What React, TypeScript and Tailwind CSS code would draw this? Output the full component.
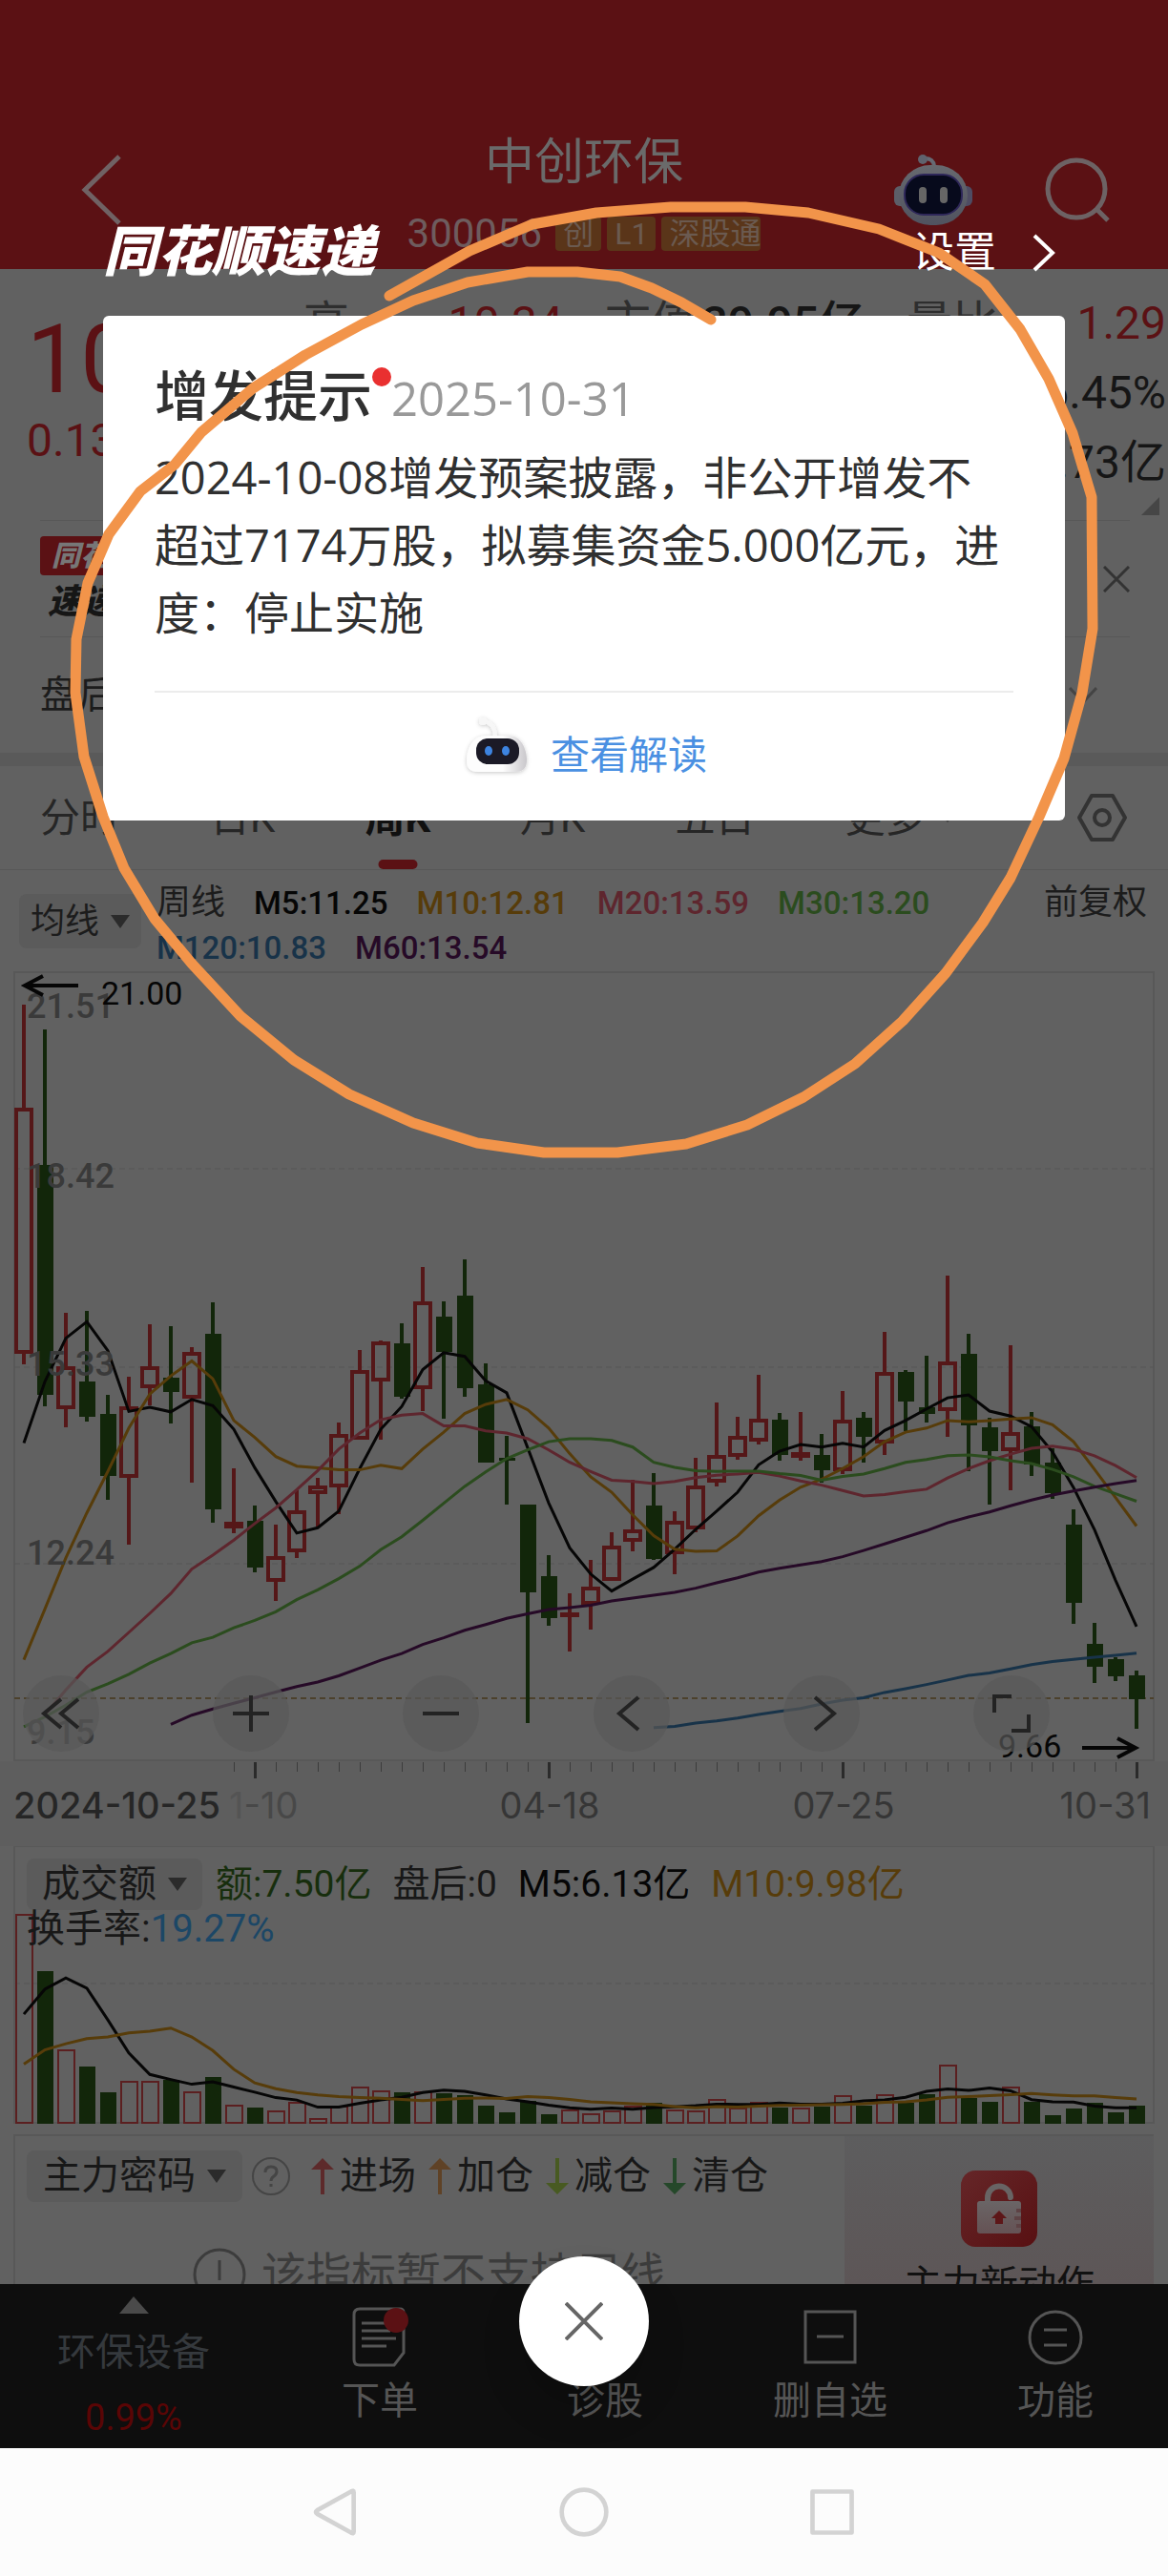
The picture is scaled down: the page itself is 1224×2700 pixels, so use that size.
import React, { useState } from 'react';

// [up, high, top, bottom, low], one entry per week
const candles = [
  [1, 1053, 1161, 1419, 1430], [0, 1079, 1221, 1462, 1474], [1, 1376, 1432, 1477, 1496], [0, 1374, 1448, 1485, 1490],
  [0, 1462, 1482, 1547, 1572], [1, 1443, 1474, 1549, 1619], [1, 1388, 1432, 1455, 1473], [0, 1390, 1444, 1459, 1492],
  [1, 1412, 1417, 1466, 1554], [0, 1365, 1398, 1582, 1596], [1, 1539, 1595, 1602, 1607], [0, 1578, 1594, 1643, 1648],
  [1, 1598, 1631, 1658, 1678], [1, 1562, 1583, 1627, 1633], [1, 1549, 1557, 1566, 1600], [1, 1491, 1503, 1559, 1587],
  [1, 1415, 1436, 1509, 1509], [1, 1405, 1406, 1448, 1509], [0, 1387, 1408, 1464, 1466], [1, 1328, 1364, 1456, 1479],
  [0, 1364, 1380, 1417, 1487], [0, 1320, 1358, 1455, 1464], [0, 1429, 1451, 1533, 1533], [0, 1505, 1528, 1531, 1577],
  [0, 1577, 1577, 1669, 1806], [0, 1630, 1652, 1696, 1704], [1, 1670, 1690, 1695, 1731], [1, 1635, 1663, 1682, 1708],
  [1, 1606, 1620, 1657, 1657], [1, 1551, 1603, 1616, 1626], [0, 1544, 1578, 1634, 1635], [1, 1584, 1594, 1629, 1650],
  [1, 1528, 1557, 1603, 1606], [1, 1470, 1525, 1554, 1558], [1, 1485, 1505, 1527, 1530], [1, 1441, 1487, 1511, 1514],
  [0, 1481, 1488, 1525, 1531], [1, 1480, 1522, 1528, 1531], [0, 1503, 1525, 1541, 1554], [1, 1458, 1488, 1542, 1545],
  [0, 1480, 1486, 1506, 1533], [1, 1396, 1438, 1513, 1525], [0, 1436, 1438, 1469, 1500], [0, 1421, 1475, 1482, 1491],
  [1, 1337, 1427, 1479, 1506], [0, 1398, 1419, 1494, 1542], [0, 1486, 1496, 1521, 1577], [1, 1410, 1501, 1521, 1562],
  [0, 1480, 1495, 1535, 1547], [0, 1518, 1533, 1565, 1571], [0, 1582, 1598, 1680, 1702], [0, 1701, 1723, 1747, 1764],
  [0, 1737, 1739, 1757, 1762], [0, 1751, 1756, 1781, 1812],
];

const averages = [
  { name: 'm5', color: '#060606', start: 0, data: [628, 480, 375, 335, 405, 552, 542, 553, 523, 538, 595, 688, 770, 846, 833, 793, 690, 595, 540, 451, 410, 419, 478, 507, 640, 773, 882, 945, 986, 957, 929, 885, 837, 793, 747, 681, 648, 632, 638, 629, 638, 598, 574, 546, 519, 512, 551, 563, 589, 650, 736, 838, 960, 1072] },
  { name: 'm10', color: '#573c0a', start: 0, data: [1152, 1030, 906, 797, 697, 592, 510, 466, 430, 473, 574, 615, 661, 684, 688, 693, 693, 682, 690, 643, 602, 557, 535, 523, 548, 592, 654, 710, 747, 802, 852, 885, 890, 889, 853, 804, 766, 735, 716, 690, 661, 625, 602, 592, 574, 577, 574, 570, 567, 584, 625, 692, 760, 829] },
  { name: 'm20', color: '#5e262e', start: 1, data: [1285, 1225, 1170, 1132, 1086, 1040, 992, 933, 899, 863, 823, 785, 741, 695, 643, 604, 572, 561, 557, 587, 587, 599, 604, 618, 645, 675, 697, 718, 721, 726, 721, 712, 706, 703, 699, 708, 720, 730, 743, 756, 753, 746, 740, 713, 690, 671, 655, 641, 636, 643, 659, 683, 712] },
  { name: 'm30', color: '#2b4c1e', start: 0, data: [1314, 1290, 1262, 1230, 1210, 1187, 1160, 1137, 1111, 1098, 1075, 1057, 1036, 1007, 983, 956, 926, 886, 855, 815, 774, 733, 698, 666, 645, 625, 618, 618, 622, 638, 675, 687, 695, 697, 696, 696, 702, 707, 718, 709, 703, 690, 675, 668, 659, 657, 662, 671, 678, 692, 710, 733, 751, 769] },
  { name: 'm60', color: '#260a27', start: 7, data: [1308, 1286, 1271, 1257, 1244, 1230, 1217, 1206, 1191, 1172, 1153, 1137, 1115, 1099, 1081, 1067, 1052, 1041, 1031, 1026, 1020, 1010, 1003, 996, 989, 979, 966, 954, 940, 931, 923, 915, 903, 888, 872, 856, 840, 821, 807, 795, 780, 766, 754, 744, 735, 726, 719] },
  { name: 'm120', color: '#183349', start: 30, data: [1316, 1313, 1305, 1300, 1293, 1284, 1277, 1270, 1259, 1250, 1244, 1231, 1222, 1212, 1201, 1190, 1184, 1174, 1164, 1156, 1151, 1146, 1141, 1136] },
];

const volumes = [
  2006, 2066, 2148, 2166, 2193, 2181, 2181, 2180, 2192, 2177, 2206, 2209, 2212, 2203, 2220, 2207, 2187, 2191,
  2193, 2192, 2194, 2196, 2207, 2214, 2202, 2216, 2211, 2215, 2212, 2207, 2204, 2211, 2212, 2200, 2209, 2203,
  2209, 2209, 2208, 2196, 2207, 2195, 2204, 2195, 2164, 2199, 2203, 2187, 2203, 2217, 2210, 2204, 2214, 2207,
];
const volumeM5 = [703, 630, 597, 627, 720, 817, 880, 895, 909, 902, 917, 932, 948, 955, 976, 976, 965, 955, 947, 933, 926, 930, 940, 952, 960, 970, 978, 982, 979, 982, 977, 975, 972, 967, 968, 968, 964, 967, 967, 965, 958, 955, 947, 930, 923, 927, 920, 928, 954, 960, 961, 973, 978, 978];
const volumeM10 = [850, 808, 790, 775, 770, 758, 753, 744, 770, 810, 865, 905, 922, 933, 940, 945, 948, 950, 953, 957, 953, 950, 949, 951, 945, 948, 953, 960, 963, 966, 968, 974, 978, 974, 976, 973, 971, 970, 969, 968, 966, 962, 960, 955, 947, 945, 942, 939, 936, 940, 943, 943, 948, 952];

const x = (i: number) => 25 + i * 22;
const priceLine = (data: number[], start: number) =>
  data.map((v, i) => `${x(i + start)},${(1240 + v * 0.4337).toFixed(1)}`).join(' ');
const volumeLine = (data: number[]) => data.map((v, i) => `${x(i)},${(1860 + v / 2.8).toFixed(1)}`).join(' ');

const tabs = ['分时', '日K', '周K', '月K', '五日'];

function Triangle({ className = 'w-5' }: { className?: string }) {
  return (
    <svg viewBox="0 0 20 14" className={className}>
      <path d="M0 0H20L10 14Z" fill="#2b2b2b" />
    </svg>
  );
}

function HeaderRobot() {
  return (
    <svg viewBox="0 0 82 76" className="w-[82px]">
      <defs>
        <linearGradient id="head" x1="0" y1="0" x2="0" y2="1">
          <stop offset="0" stopColor="#67696f" />
          <stop offset="1" stopColor="#50535f" />
        </linearGradient>
      </defs>
      <path d="M30 5Q41 4 42 13" stroke="#666a74" strokeWidth="4" fill="none" />
      <circle cx="30" cy="6" r="5" fill="#5f636e" />
      <rect x="0" y="34" width="14" height="21" rx="6" fill="#5c5e68" />
      <rect x="68" y="34" width="14" height="21" rx="6" fill="#4e4c63" />
      <rect x="5" y="12" width="72" height="63" rx="33" fill="url(#head)" />
      <rect x="11" y="22" width="60" height="42" rx="20" fill="#070a1c" stroke="#2e2759" strokeWidth="2" />
      <rect x="26" y="35" width="8" height="17" rx="4" fill="#666" />
      <rect x="48" y="35" width="8" height="17" rx="4" fill="#666" />
    </svg>
  );
}

function CardRobot() {
  return (
    <svg viewBox="0 0 76 68" className="w-[76px]">
      <defs>
        <linearGradient id="shell" x1="0" y1="0" x2="1" y2="0">
          <stop offset="0.6" stopColor="#fdfdfd" />
          <stop offset="1" stopColor="#c9c7cb" />
        </linearGradient>
        <filter id="soft" x="-20%" y="-20%" width="140%" height="140%">
          <feDropShadow dx="0" dy="1" stdDeviation="2" floodColor="#000" floodOpacity="0.22" />
        </filter>
      </defs>
      <g filter="url(#soft)">
        <path d="M24 9Q36 11 36 26" stroke="#f7f7f7" strokeWidth="4" fill="none" />
        <circle cx="23" cy="9" r="4" fill="#f7f7f7" />
        <path d="M27 24H50C63 24 69 38 69 50C69 59 64 62 57 62H18C10 62 6 58 6 51C6 38 12 24 27 24Z" fill="url(#shell)" />
      </g>
      <rect x="16" y="27" width="45" height="27" rx="12" fill="#1b1a26" />
      <ellipse cx="29" cy="40" rx="4" ry="5" fill="#3d84e0" />
      <ellipse cx="47" cy="40" rx="4" ry="5" fill="#3d84e0" />
    </svg>
  );
}

function Header() {
  return (
    <header className="grid grid-cols-[1fr_auto_1fr] bg-[#5b1114] pt-[134px] text-[#6a6a6a]">
      <button aria-label="返回" className="flex h-[130px] items-center pl-[84px]">
        <svg viewBox="0 0 44 74" className="w-11" fill="none" stroke="#706264" strokeWidth="5">
          <path d="M41 2L5 37L41 72" />
        </svg>
      </button>
      <div className="flex flex-col items-center">
        <h1 className="h-[74px] text-[52px] leading-[74px]">中创环保</h1>
        <div className="flex h-[74px] items-center gap-[6px] text-[32px] leading-9 text-[#6b5a50]">
          <span className="mr-2 text-[42px] text-[#6e5c5e]">300056</span>
          <span className="rounded bg-[#5a3519] px-2">创</span>
          <span className="rounded bg-[#5a3519] px-2">L1</span>
          <span className="rounded bg-[#5a3519] pl-2">深股通</span>
        </div>
      </div>
      <div className="flex h-[130px] items-center justify-end gap-[76px] pr-[59px]">
        <button aria-label="智能助手"><HeaderRobot /></button>
        <button aria-label="搜索">
          <svg viewBox="0 0 70 70" className="w-[70px]" fill="none" stroke="#6d6264" strokeWidth="5">
            <circle cx="33" cy="34" r="30" />
            <path d="M54 55L66 67" />
          </svg>
        </button>
      </div>
    </header>
  );
}

function Quote() {
  return (
    <section>
      <div className="flex pt-5 text-[48px] leading-[73px] text-[#161616]">
        <div className="w-[318px] pl-[28px] text-[#5b1114]">
          <div className="pt-5 text-[100px] leading-[110px]">10.22</div>
          <div className="leading-[60px]">0.13</div>
        </div>
        <div className="grid flex-1 grid-cols-3 gap-x-11 pr-[2px]">
          <p className="flex justify-between"><span className="text-[#2e2e2e]">高</span><span className="text-[#5b1114]">10.34</span></p>
          <p className="flex justify-between"><span className="text-[#2e2e2e]">市值</span><span className="font-medium">39.95亿</span></p>
          <p className="flex justify-between"><span className="text-[#2e2e2e]">量比</span><span className="text-[#5b1114]">1.29</span></p>
          <p className="col-start-3 text-right">6.45%</p>
          <p className="col-start-3 text-right">0.73亿</p>
        </div>
      </div>
      <div className="flex justify-end pr-[9px]">
        <svg viewBox="0 0 19 19" className="w-[19px]"><path d="M19 0V19H0Z" fill="#464646" /></svg>
      </div>
      <div className="mt-[5px] mr-[40px] ml-[42px] flex h-[123px] items-center justify-between border-y border-[#585858]">
        <div className="w-[100px] overflow-hidden leading-[41px] font-black italic">
          <p className="rounded bg-[#5b1114] pl-3 text-[30px] whitespace-nowrap text-[#777]">同花顺</p>
          <p className="pt-2 pl-2 text-[36px] text-[#161616]">速递</p>
        </div>
        <button aria-label="关闭提示">
          <svg viewBox="0 0 28 28" className="w-7" stroke="#333" strokeWidth="3"><path d="M1 1L27 27M27 1L1 27" /></svg>
        </button>
      </div>
      <div className="flex h-[121px] items-center justify-between pr-[74px] pl-[42px] text-[40px] text-[#1c1c1c]">
        <span>盘后</span>
        <svg viewBox="0 0 30 20" className="w-[30px]" fill="none" stroke="#444" strokeWidth="3"><path d="M1 2L15 17L29 2" /></svg>
      </div>
      <div className="h-[14px] bg-[#5a5a5a]" />
    </section>
  );
}

function Tabs({ active, onSelect }: { active: string; onSelect: (tab: string) => void }) {
  return (
    <nav className="flex h-[109px] items-center gap-[94px] border-b border-[#585858] px-[42px] text-[42px] text-[#262626]">
      {tabs.map((tab) => (
        <button key={tab} onClick={() => onSelect(tab)} className={`relative h-full ${tab === active ? 'font-bold text-[#101010]' : ''}`}>
          {tab}
          {tab === active && <span className="absolute bottom-0 left-1/2 h-[10px] w-[41px] -translate-x-1/2 rounded-full bg-[#5b1114]" />}
        </button>
      ))}
      <button className="flex items-center gap-4">更多<Triangle className="w-4 opacity-60" /></button>
      <button aria-label="图表设置" className="ml-auto">
        <svg viewBox="0 0 54 52" className="w-[54px]" fill="none" stroke="#333" strokeWidth="4">
          <path d="M16 3H38L51 26L38 49H16L3 26Z" strokeLinejoin="round" />
          <circle cx="27" cy="26" r="8" />
        </svg>
      </button>
    </nav>
  );
}

function AverageLegend() {
  return (
    <div className="flex h-[106px] items-start pr-[22px] pl-[20px] text-[#1c1c1c]">
      <button className="mt-[25px] flex h-[57px] w-[128px] items-center justify-center gap-3 rounded-lg bg-[#5b5b5b] text-[36px]">
        均线<Triangle />
      </button>
      <div className="mt-[11px] ml-4 flex flex-1 flex-wrap gap-x-[30px] text-[33px] leading-[47px] font-medium">
        <span className="text-[36px] font-normal">周线</span>
        <span className="text-[#060606]">M5:11.25</span>
        <span className="text-[#573c0a]">M10:12.81</span>
        <span className="text-[#5e262e]">M20:13.59</span>
        <span className="text-[#2b4c1e]">M30:13.20</span>
        <span className="text-[#183349]">M120:10.83</span>
        <span className="text-[#260a27]">M60:13.54</span>
      </div>
      <button className="mt-[11px] text-[36px] leading-[47px]">前复权</button>
    </div>
  );
}

function PriceChart() {
  return (
    <div className="relative">
      <svg viewBox="0 1018 1224 917" className="block w-full" fontFamily="Roboto, sans-serif">
        <rect x="15" y="1019" width="1194" height="826" fill="none" stroke="#585858" strokeWidth="2" />
        <rect x="0" y="1846" width="1224" height="89" fill="#5e5e5e" />
        {[1225, 1433, 1639].map((y) => (
          <line key={y} x1="15" x2="1209" y1={y} y2={y} stroke="#565656" strokeDasharray="6 4" />
        ))}
        <line x1="15" x2="1209" y1="1780" y2="1780" stroke="#4c412c" strokeWidth="2" strokeDasharray="6 4" />
        {candles.map(([up, high, top, bottom, low], i) =>
          up ? (
            <g key={i} stroke="#551718" strokeWidth="4" fill="none">
              <path d={`M${x(i)} ${high}V${top}M${x(i)} ${bottom}V${low}`} />
              <rect x={x(i) - 8} y={top + 2} width="16" height={Math.max(bottom - top - 4, 1)} />
            </g>
          ) : (
            <g key={i} fill="#12260a">
              <rect x={x(i) - 2} y={high} width="4" height={low - high} />
              <rect x={x(i) - 8} y={top} width="17" height={bottom - top} />
            </g>
          ),
        )}
        {averages.map((line) => (
          <polyline key={line.name} points={priceLine(line.data, line.start)} fill="none" stroke={line.color} strokeWidth="3" />
        ))}
        <g fontSize="36" fontWeight="500" fill="#3a3a3a">
          <text x="28" y="1067">21.51</text>
          <text x="28" y="1245">18.42</text>
          <text x="28" y="1442">15.33</text>
          <text x="28" y="1640">12.24</text>
          <text x="28" y="1828">9.15</text>
        </g>
        <g fontSize="34" fill="#060606">
          <text x="106" y="1053">21.00</text>
          <text x="1046" y="1842">9.66</text>
        </g>
        <g fill="none" stroke="#060606" strokeWidth="4">
          <path d="M82 1033H26M45 1023L26 1033L45 1043" />
          <path d="M1134 1832H1190M1171 1822L1190 1832L1171 1842" />
        </g>
        {candles.map((_, i) =>
          i < 10 ? null : [11, 25, 39, 53].includes(i) ? (
            <rect key={i} x={x(i) - 1} y="1847" width="3" height="17" fill="#2b2b2b" />
          ) : (
            <rect key={i} x={x(i)} y="1847" width="1" height="10" fill="#3c3c3c" />
          ),
        )}
        <g fontFamily="Inter, sans-serif" fontSize="38" fill="#363636">
          <text x="14" y="1906" fill="#262626" fontWeight="500">2024-10-25</text>
          <text x="240" y="1906" fill="#484848"><tspan fill="#545454">1</tspan>-10</text>
          <text x="576" y="1906" textAnchor="middle">04-18</text>
          <text x="884" y="1906" textAnchor="middle">07-25</text>
          <text x="1206" y="1906" textAnchor="end">10-31</text>
        </g>
      </svg>
      {/* floating chart controls */}
      <div className="absolute inset-x-0 bottom-[99px] flex justify-between pr-[124px] pl-6">
        {[
          ['快退', 'M40 25L22 40L40 55M58 25L40 40L58 55'],
          ['放大', 'M21 40H59M40 21V59'],
          ['缩小', 'M21 40H59'],
          ['左移', 'M47 23L27 40L47 57'],
          ['右移', 'M33 23L53 40L33 57'],
          ['全屏', 'M22 39V22H40M40 58H58V41'],
        ].map(([label, d]) => (
          <button key={label} aria-label={label} className="size-20 rounded-full bg-[#595959]/70">
            <svg viewBox="0 0 80 80" fill="none" stroke="#232323" strokeWidth="4"><path d={d} /></svg>
          </button>
        ))}
      </div>
    </div>
  );
}

function VolumeChart() {
  return (
    <section className="grid">
      <svg viewBox="0 1935 1224 302" className="col-start-1 row-start-1 block w-full">
        <rect x="15" y="1935" width="1194" height="290" fill="none" stroke="#585858" strokeWidth="2" />
        <line x1="15" x2="1209" y1="2079" y2="2079" stroke="#565656" strokeDasharray="6 4" />
        {volumes.map((top, i) =>
          candles[i][0] ? (
            <rect key={i} x={x(i) - 8} y={top + 1} width="17" height={2224 - top} fill="none" stroke="#5b1f20" strokeWidth="2" />
          ) : (
            <rect key={i} x={x(i) - 8} y={top} width="17" height={2226 - top} fill="#12260a" />
          ),
        )}
        <polyline points={volumeLine(volumeM5)} fill="none" stroke="#060606" strokeWidth="3" />
        <polyline points={volumeLine(volumeM10)} fill="none" stroke="#573c0a" strokeWidth="3" />
      </svg>
      <div className="col-start-1 row-start-1 pt-[13px] pl-7 text-[39px] text-[#181818]">
        <div className="flex h-[54px] items-center gap-[22px]">
          <button className="flex h-[54px] w-[184px] items-center justify-center gap-3 rounded-lg bg-[#5b5b5b] text-[40px]">
            成交额<Triangle />
          </button>
          <span className="-ml-2 text-[#172e0d]">额:7.50亿</span>
          <span>盘后:0</span>
          <span className="text-[#060606]">M5:6.13亿</span>
          <span className="text-[#573c0a]">M10:9.98亿</span>
        </div>
        <p className="text-[40px] leading-[40px]">换手率:<span className="text-[#1c4766]">19.27%</span></p>
      </div>
    </section>
  );
}

function Arrow({ down, color }: { down?: boolean; color: string }) {
  return (
    <svg viewBox="0 0 24 38" className="w-6" fill={color}>
      <path d={down ? 'M10 0H14V26H24L12 38L0 26H10Z' : 'M10 38H14V12H24L12 0L0 12H10Z'} />
    </svg>
  );
}

function Signals() {
  return (
    <section className="mr-[15px] ml-[14px] flex h-[157px] overflow-hidden border-t-2 border-l-2 border-[#585858]">
      <div className="flex-1 text-[40px] text-[#181818]">
        <div className="flex items-center gap-[13px] pt-[12px] pl-[12px]">
          <button className="flex h-[54px] w-[226px] items-center justify-center gap-3 rounded-lg bg-[#5b5b5b]">
            主力密码<Triangle />
          </button>
          <svg viewBox="0 0 42 42" className="-ml-1 w-[42px]" fill="none" stroke="#454545" strokeWidth="2">
            <circle cx="21" cy="21" r="19" />
            <path d="M15 17Q15 11 21 11Q27 11 27 16Q27 19 24 21Q21 23 21 26M21 29V32" strokeWidth="3" />
          </svg>
          <span className="ml-2 flex items-center gap-[6px]"><Arrow color="#5d2a2b" />进场</span>
          <span className="flex items-center gap-[6px]"><Arrow color="#5f4226" />加仓</span>
          <span className="flex items-center gap-[6px]"><Arrow down color="#485a22" />减仓</span>
          <span className="flex items-center gap-[6px]"><Arrow down color="#25482a" />清仓</span>
        </div>
        <div className="flex items-center gap-4 pt-[38px] pl-[186px] text-[47px] leading-[70px] whitespace-nowrap text-[#3c3c3c]">
          <svg viewBox="0 0 56 56" className="w-14" fill="none" stroke="#3c3c3c" strokeWidth="3">
            <circle cx="28" cy="28" r="26" />
            <path d="M28 13V34M28 38V43" />
          </svg>
          该指标暂不支持周线
        </div>
      </div>
      <div className="flex w-[324px] flex-col items-center bg-linear-to-b from-[#5d5d5e] to-[#5d5657] pt-[36px]">
        <svg viewBox="0 0 80 80" className="w-20 shrink-0">
          <defs>
            <linearGradient id="lock" x1="0" y1="0" x2="1" y2="1">
              <stop offset="0" stopColor="#652628" />
              <stop offset="1" stopColor="#581012" />
            </linearGradient>
            <linearGradient id="body" x1="0" y1="0" x2="0" y2="1">
              <stop offset="0" stopColor="#6a6566" />
              <stop offset="1" stopColor="#655254" />
            </linearGradient>
          </defs>
          <rect width="80" height="80" rx="15" fill="url(#lock)" />
          <path d="M28 34V29A12 12 0 0 1 52 28" fill="none" stroke="#686464" strokeWidth="6" strokeLinecap="round" />
          <rect x="17" y="32" width="46" height="34" rx="3" fill="url(#body)" />
          <path d="M40 42L48 50H44V56H36V50H32Z" fill="#5d1618" />
          <path d="M58 42H63M56 50H63M58 58H63" stroke="#5e4345" strokeWidth="4" />
        </svg>
        <p className="pt-4 text-[40px] leading-[48px] text-[#111]">主力新动作</p>
      </div>
    </section>
  );
}

function BottomBar() {
  return (
    <nav className="grid h-[172px] grid-cols-[280px_1fr_1fr_1fr_1fr] bg-[#0e0e0e] text-[40px] leading-[50px] text-[#555]">
      <button className="flex flex-col items-center pt-[13px] text-[#35393d]">
        <svg viewBox="0 0 31 18" className="w-[31px]"><path d="M15 0L31 18H0Z" fill="#4a4a4a" /></svg>
        <span className="pt-4">环保设备</span>
        <span className="pt-[18px] text-[38px] text-[#5a0505]">0.99%</span>
      </button>
      <button className="flex flex-col items-center pt-[22px]">
        <svg viewBox="0 0 62 66" className="h-[66px] w-[62px]" fill="none" stroke="#555" strokeWidth="3">
          <path d="M10 4H52Q56 4 56 8V50L46 63H10Q4 63 4 57V10Q4 4 10 4Z" />
          <path d="M12 19H42M12 27H42M12 35H48M12 43H38" />
          <circle cx="48" cy="16" r="13" fill="#5b1114" stroke="none" />
        </svg>
        <span className="pt-[10px]">下单</span>
      </button>
      <button className="flex items-start justify-center pt-[98px]">诊股</button>
      <button className="flex flex-col items-center pt-[22px]">
        <svg viewBox="0 0 60 66" className="h-[66px] w-[60px]" fill="none" stroke="#555" strokeWidth="3">
          <path d="M4 7H56V60H4ZM16 33H44" />
        </svg>
        <span className="pt-[10px]">删自选</span>
      </button>
      <button className="flex flex-col items-center pt-[22px]">
        <svg viewBox="0 0 60 66" className="h-[66px] w-[60px]" fill="none" stroke="#555" strokeWidth="3">
          <circle cx="30" cy="34" r="27" />
          <path d="M18 26H42M18 42H42" />
        </svg>
        <span className="pt-[10px]">功能</span>
      </button>
    </nav>
  );
}

function SystemNav() {
  return (
    <div className="flex h-[134px] items-center justify-center gap-[204px] bg-[#fcfcfc]">
      {[
        ['后退', 'M50 8V52Q50 55 47 53L9 32Q6 30 9 28L47 7Q50 5 50 8Z'],
        ['主页', 'M30 5A25 25 0 1 1 30 55A25 25 0 1 1 30 5Z'],
        ['最近任务', 'M8 7H52V53H8Z'],
      ].map(([label, d]) => (
        <button key={label} aria-label={label}>
          <svg viewBox="0 0 60 60" className="w-[56px]" fill="none" stroke="#d3d3d3" strokeWidth="5" strokeLinejoin="round">
            <path d={d} />
          </svg>
        </button>
      ))}
    </div>
  );
}

function NoticeDialog({ onClose }: { onClose: () => void }) {
  return (
    <div role="dialog" aria-labelledby="notice-title">
      <div className="absolute inset-x-0 top-0 px-[108px] pt-[234px]">
        <div className="mb-[35px] flex h-[62px] items-center justify-between pr-[10px] text-white">
          <p className="text-[57px] font-black italic">同花顺速递</p>
          <a href="#settings" className="flex items-center gap-[38px] text-[44px]">
            设置
            <svg viewBox="0 0 24 40" className="w-6" fill="none" stroke="#fff" strokeWidth="4"><path d="M2 2L21 20L2 38" /></svg>
          </a>
        </div>
        <div className="rounded-md bg-white px-[54px] pt-[50px] text-[#303030]">
          <div className="flex items-center leading-[72px]">
            <h2 id="notice-title" className="relative text-[57px] font-medium">
              增发提示
              <span className="absolute top-[4px] -right-5 size-5 rounded-full bg-[#e93030]" />
            </h2>
            <time className="ml-[20px] font-['Open_Sans','Noto_Sans_CJK_SC',sans-serif] text-[49px] text-[#999]">2025-10-31</time>
          </div>
          <p className="mt-3 font-['Open_Sans','Noto_Sans_CJK_SC',sans-serif] text-[47px] leading-[71px]">
            2024-10-08增发预案披露，非公开增发不超过7174万股，拟募集资金5.000亿元，进度：停止实施
          </p>
          <a href="#detail" className="mt-[46px] flex h-[136px] items-center justify-center gap-[18px] border-t-2 border-[#ececec] text-[41px] text-[#4a90e2]">
            <span className="pb-6"><CardRobot /></span>
            查看解读
          </a>
        </div>
      </div>
      <div className="absolute inset-x-0 top-[2365px] flex justify-center">
        <button aria-label="关闭" onClick={onClose} className="flex size-[136px] items-center justify-center rounded-full bg-white shadow-2xl">
          <svg viewBox="0 0 40 40" className="w-10" stroke="#666" strokeWidth="4"><path d="M1 1L39 39M39 1L1 39" /></svg>
        </button>
      </div>
    </div>
  );
}

export default function App() {
  const [active, setActive] = useState('周K');
  const [open, setOpen] = useState(true);

  return (
    <main lang="zh-CN" className="relative overflow-hidden bg-[#616161] font-['Roboto','Noto_Sans_CJK_SC',sans-serif]">
      <Header />
      <Quote />
      <Tabs active={active} onSelect={setActive} />
      <AverageLegend />
      <PriceChart />
      <VolumeChart />
      <Signals />
      <BottomBar />
      <SystemNav />

      {open && <NoticeDialog onClose={() => setOpen(false)} />}

      {/* hand-drawn marker ring */}
      <svg viewBox="0 0 1224 2700" className="pointer-events-none absolute top-0 left-0 w-full">
        <polyline
          fill="none"
          stroke="#f2944a"
          strokeWidth="11"
          strokeLinecap="round"
          strokeLinejoin="round"
          points="408,310 492,263 558,235 625,223 703,217 781,217 847,223 921,240 984,265 1032,298 1069,345 1099,397 1124,454 1144,521 1145,659 1134,726 1115,795 1089,856 1059,920 1030,967 991,1020 946,1070 896,1115 842,1150 783,1179 719,1199 647,1208 570,1208 500,1198 433,1177 366,1147 308,1111 252,1065 201,1010 162,963 130,910 108,856 88,793 79,726 80,670 92,611 114,560 147,515 183,487 211,453 265,407 320,372 379,340 433,315 490,296 553,285 605,285 650,290 683,302 714,317 745,335"
        />
      </svg>
    </main>
  );
}
